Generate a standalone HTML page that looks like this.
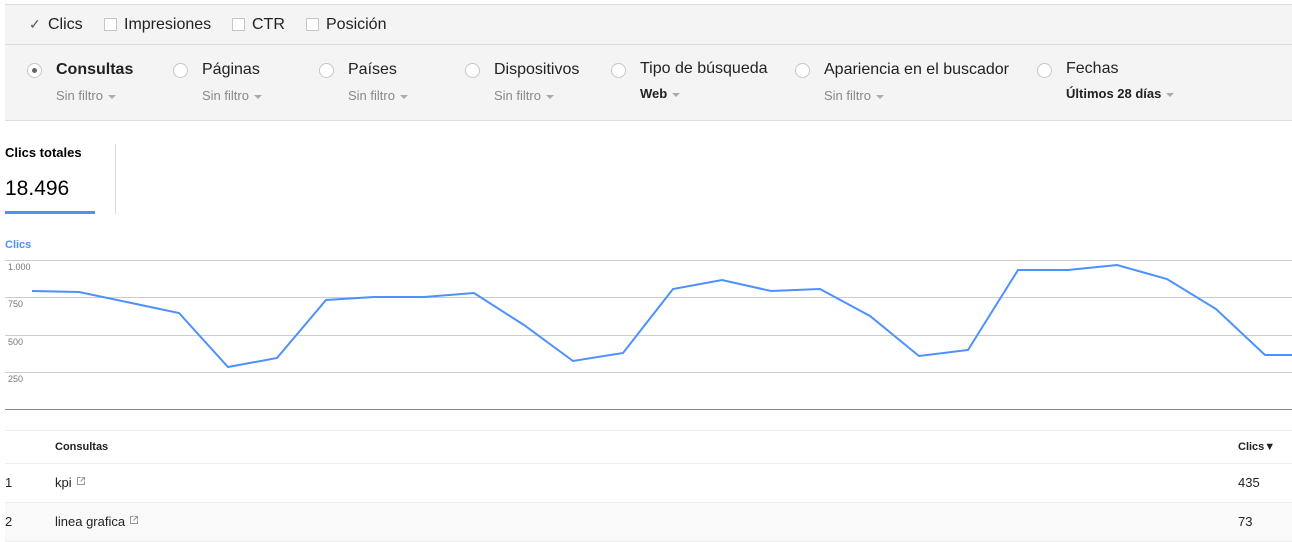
<!DOCTYPE html>
<html><head><meta charset="utf-8"><style>
body{margin:0;width:1292px;height:542px;overflow:hidden;background:#fff;font-family:"Liberation Sans",Arial,sans-serif;position:relative;color:#222}
.a{position:absolute;white-space:nowrap}
.hdr{position:absolute;left:5px;top:4px;width:1287px;height:115px;background:#f4f4f4;border-top:1px solid #ddd;border-bottom:1px solid #ddd}
.cb{position:absolute;width:11px;height:11px;border:1px solid #c6c6c6;background:#fff;top:18px}
.rd{position:absolute;width:13px;height:13px;border:1px solid #c6c6c6;border-radius:50%;background:#fff;top:63px}
.t1{font-size:16px;top:61px}
.t2{font-size:13px;color:#888;top:88px}
.car{display:inline-block;width:0;height:0;border-left:4px solid transparent;border-right:4px solid transparent;border-top:4px solid #aaa;vertical-align:middle;margin-left:5px}
.ext{display:inline-block;margin-left:4px;vertical-align:top;margin-top:1px}
</style></head><body>
<div class="hdr"></div>
<div class="a" style="left:5px;top:44px;width:1287px;border-top:1px solid #ddd"></div>
<div class="a" style="left:29px;top:16px;font-size:14px;color:#555">✓</div>
<div class="a" style="left:48px;top:16px;font-size:16px">Clics</div>
<div class="cb" style="left:104px"></div><div class="a" style="left:124px;top:16px;font-size:16px">Impresiones</div>
<div class="cb" style="left:232px"></div><div class="a" style="left:252px;top:16px;font-size:16px">CTR</div>
<div class="cb" style="left:306px"></div><div class="a" style="left:326px;top:16px;font-size:16px">Posición</div>

<div class="rd" style="left:27px"><div style="position:absolute;left:4px;top:4px;width:5px;height:5px;border-radius:50%;background:#666"></div></div>
<div class="a t1" style="left:56px;font-weight:bold">Consultas</div><div class="a t2" style="left:56px">Sin filtro<span class="car"></span></div>
<div class="rd" style="left:173px"></div><div class="a t1" style="left:202px">Páginas</div><div class="a t2" style="left:202px">Sin filtro<span class="car"></span></div>
<div class="rd" style="left:319px"></div><div class="a t1" style="left:348px">Países</div><div class="a t2" style="left:348px">Sin filtro<span class="car"></span></div>
<div class="rd" style="left:465px"></div><div class="a t1" style="left:494px">Dispositivos</div><div class="a t2" style="left:494px">Sin filtro<span class="car"></span></div>
<div class="rd" style="left:611px"></div><div class="a t1" style="left:640px;top:60px">Tipo de búsqueda</div><div class="a t2" style="left:640px;color:#222;font-weight:bold;top:86px">Web<span class="car"></span></div>
<div class="rd" style="left:795px"></div><div class="a t1" style="left:824px">Apariencia en el buscador</div><div class="a t2" style="left:824px">Sin filtro<span class="car"></span></div>
<div class="rd" style="left:1037px"></div><div class="a t1" style="left:1066px;top:60px">Fechas</div><div class="a t2" style="left:1066px;color:#222;font-weight:bold;top:86px">Últimos 28 días<span class="car"></span></div>

<div class="a" style="left:5px;top:145px;font-size:13px;font-weight:bold;color:#000">Clics totales</div>
<div class="a" style="left:5px;top:177px;font-size:21px;color:#000">18.496</div>
<div class="a" style="left:5px;top:211px;width:90px;height:3px;background:#4d90fe"></div>
<div class="a" style="left:115px;top:144px;height:70px;border-left:1px solid #ddd"></div>
<div class="a" style="left:5px;top:239px;font-size:11px;font-weight:bold;color:#4d90fe">Clics</div>

<svg class="a" style="left:0;top:250px" width="1292" height="170">
<g stroke="#ccc" stroke-width="1"><line x1="5" y1="10.5" x2="1292" y2="10.5"/><line x1="5" y1="47.5" x2="1292" y2="47.5"/><line x1="5" y1="85.5" x2="1292" y2="85.5"/><line x1="5" y1="122.5" x2="1292" y2="122.5"/></g>
<line x1="5" y1="159.5" x2="1292" y2="159.5" stroke="#888"/>
<g font-family="Liberation Sans,Arial,sans-serif" font-size="9" fill="#777"><text x="8" y="20">1.000</text><text x="8" y="57">750</text><text x="8" y="95">500</text><text x="8" y="132">250</text></g>
<polyline fill="none" stroke="#4d90fe" stroke-width="2" points="32,41 79,42 179,63 228,117 277,108 326,50 374,47 424,47 474,43 524,75 573,111 623,103 673,39 722,30 771,41 820,39 870,66 919,106 968,100 1018,20 1068,20 1117,15 1167,29 1216,59 1265,105 1292,105"/>
</svg>

<div class="a" style="left:5px;top:430px;width:1287px;border-top:1px solid #eee"></div>
<div class="a" style="left:55px;top:441px;font-size:11px;font-weight:bold">Consultas</div>
<div class="a" style="left:1238px;top:441px;font-size:11px;font-weight:bold">Clics▼</div>
<div class="a" style="left:5px;top:463px;width:1287px;border-top:1px solid #eee"></div>
<div class="a" style="left:5px;top:475px;font-size:13px">1</div>
<div class="a" style="left:55px;top:475px;font-size:13px">kpi<svg class="ext" width="10" height="10"><path d="M4.5 1.5H1.5V8.5H8.5V5.5M5.5 1.5H8.5V4.5M8.5 1.5L4.5 5.5" fill="none" stroke="#999" stroke-width="1"/></svg></div>
<div class="a" style="left:1238px;top:475px;font-size:13px">435</div>
<div class="a" style="left:5px;top:502px;width:1287px;height:38px;background:#f9f9f9;border-top:1px solid #eee;border-bottom:1px solid #eee"></div>
<div class="a" style="left:5px;top:514px;font-size:13px">2</div>
<div class="a" style="left:55px;top:514px;font-size:13px">linea grafica<svg class="ext" width="10" height="10"><path d="M4.5 1.5H1.5V8.5H8.5V5.5M5.5 1.5H8.5V4.5M8.5 1.5L4.5 5.5" fill="none" stroke="#999" stroke-width="1"/></svg></div>
<div class="a" style="left:1238px;top:514px;font-size:13px">73</div>
</body></html>
